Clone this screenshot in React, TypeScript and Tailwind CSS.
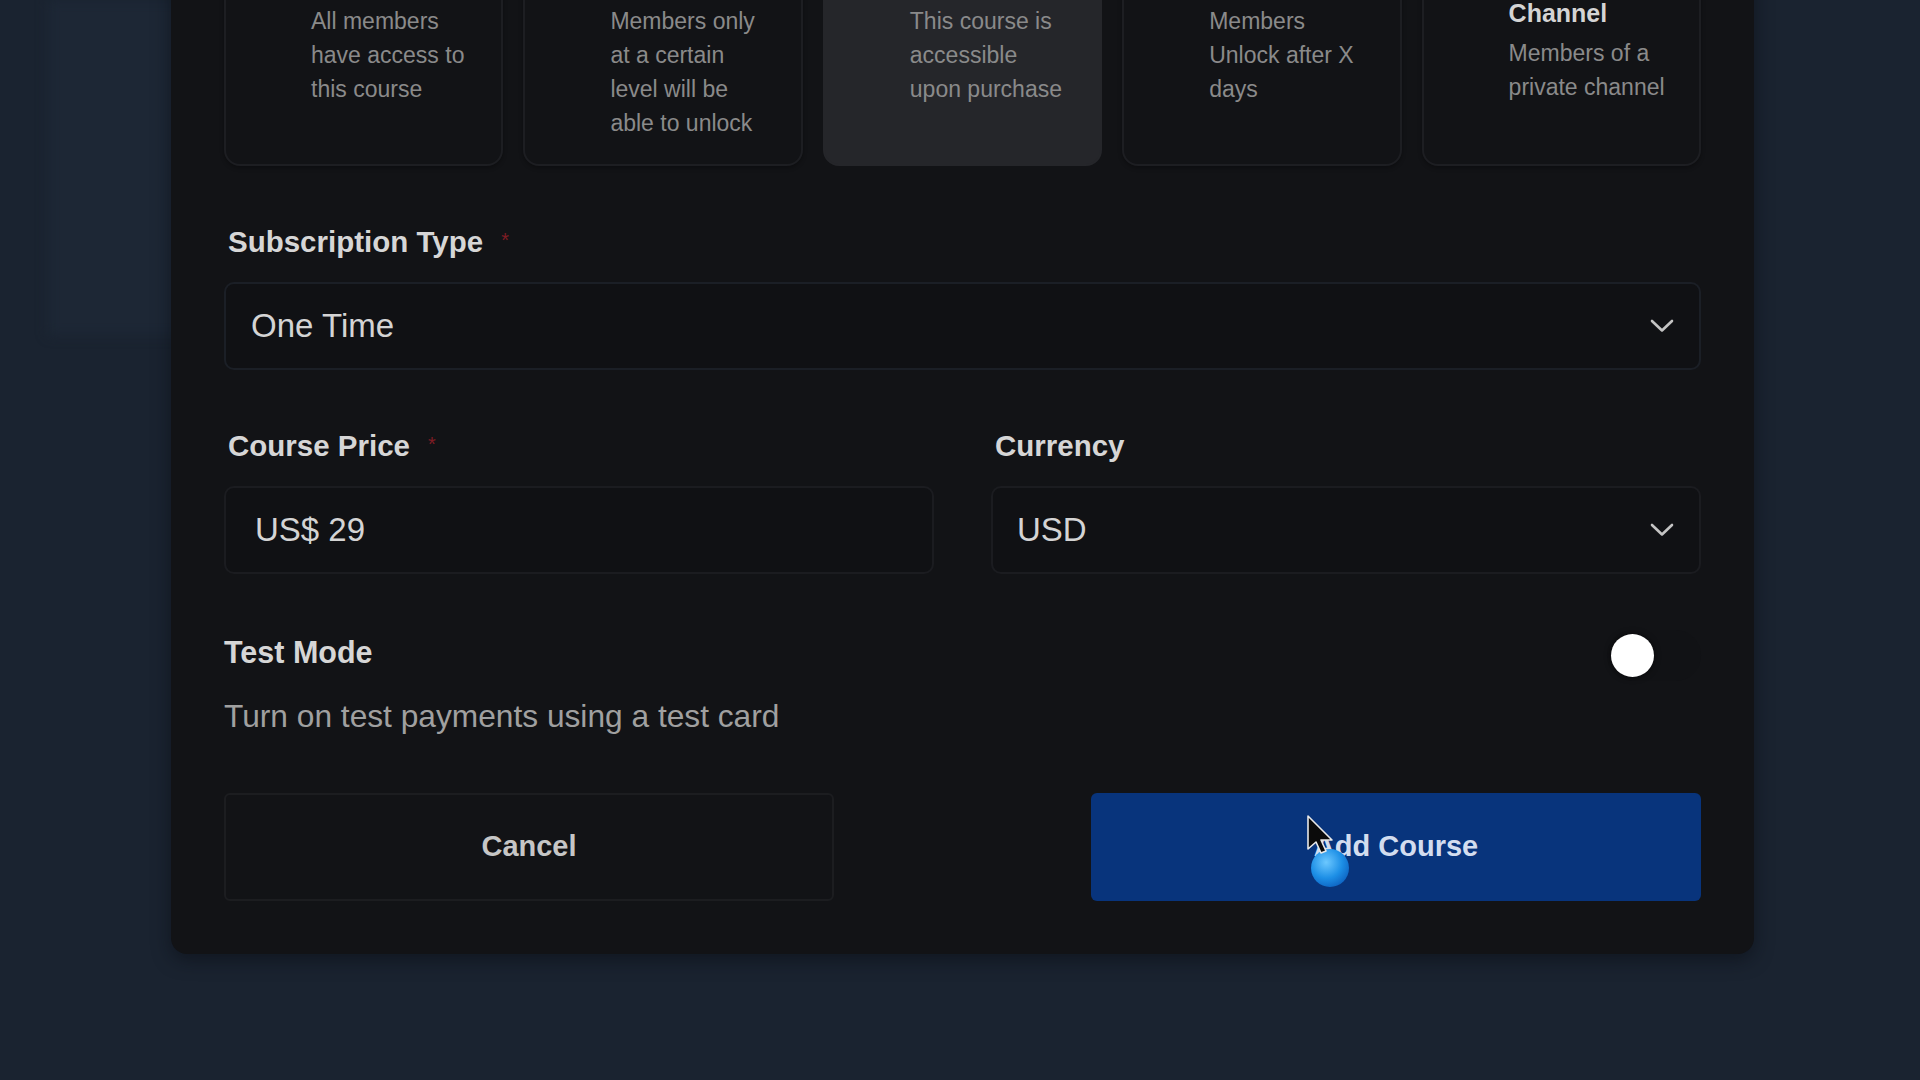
import { useState } from "react";

const accessOptions = [
  { id: "open", title: "Open", lines: ["All members", "have access to", "this course"] },
  { id: "level", title: "Level", lines: ["Members only", "at a certain", "level will be", "able to unlock"] },
  { id: "buy", title: "Buy Now", lines: ["This course is", "accessible", "upon purchase"] },
  { id: "time", title: "Time", lines: ["Members", "Unlock after X", "days"] },
  { id: "channel", title: "Private Channel", lines: ["Members of a", "private channel"] },
];

function ChevronDown() {
  return (
    <svg width="24" height="14" viewBox="0 0 24 14" fill="none">
      <path d="M2 2 L12 11.5 L22 2" stroke="#c4c4c4" strokeWidth="2.6" strokeLinecap="round" strokeLinejoin="round" />
    </svg>
  );
}

function FieldLabel({ text, required }: { text: string; required?: boolean }) {
  return (
    <div className="flex items-center mb-[23px] h-[34px] pl-[4px]">
      <span className="text-[29.5px] leading-[34px] font-bold text-[#d6d6d6]">{text}</span>
      {required && <span className="ml-[18px] -mt-[4px] text-[20px] leading-none text-[#7e1c24]">*</span>}
    </div>
  );
}

function Cursor() {
  return (
    <div className="absolute left-[1306px] top-[815px] pointer-events-none">
      <svg width="60" height="80" viewBox="0 0 60 80">
        <defs>
          <radialGradient id="blob" cx="40%" cy="35%" r="70%">
            <stop offset="0%" stopColor="#6cc8ff" />
            <stop offset="60%" stopColor="#1d8fe6" />
            <stop offset="100%" stopColor="#0d63c2" />
          </radialGradient>
        </defs>
        <circle cx="24" cy="53" r="19" fill="url(#blob)" />
        <path d="M2 1 L2 34 L10 27 L15 38 L20 36 L15 25 L26 25 Z" fill="#0b0b0b" stroke="#e8e8e8" strokeWidth="1.6" strokeLinejoin="round" />
      </svg>
    </div>
  );
}

export default function App() {
  const [selected] = useState("buy");
  const [testMode, setTestMode] = useState(false);

  return (
    <div
      className="relative w-full h-[1080px] overflow-hidden bg-[#1a2330]"
      style={{ fontFamily: '"Liberation Sans", Arial, sans-serif' }}
    >
      <div className="absolute left-[48px] top-0 w-[140px] h-[335px] bg-[#1d2735] blur-[6px]" />
      <div className="relative ml-[171px] w-[1583px] -mt-[203px] pt-[130px] px-[53px] pb-[53px] rounded-[16px] bg-[#121316] shadow-[0_6px_18px_rgba(10,12,20,0.55)]">
        <div className="grid grid-cols-5 gap-[20px]">
          {accessOptions.map((o) => {
            const active = o.id === selected;
            return (
              <div
                key={o.id}
                className={
                  active
                    ? "rounded-[16px] border-2 border-[#25262a] bg-[#25262a] pl-[85px] pr-[20px] pt-[36px] pb-[24px]"
                    : "rounded-[16px] border-2 border-[#1d1e22] bg-[#121316] pl-[85px] pr-[20px] pt-[36px] pb-[24px] shadow-[0_2px_4px_rgba(0,0,0,0.3)]"
                }
              >
                <div className="text-[25px] leading-[32px] font-bold text-[#d4d4d4] w-[150px]">{o.title}</div>
                <div className="mt-[7px] text-[23px] leading-[34px] text-[#8a8a8a]">
                  {o.lines.map((l) => (
                    <span key={l} className="block whitespace-nowrap">
                      {l}
                    </span>
                  ))}
                </div>
              </div>
            );
          })}
        </div>

        <div className="mt-[59px]">
          <FieldLabel text="Subscription Type" required />
          <div className="flex items-center justify-between h-[88px] rounded-[10px] border-2 border-[#1b1f26] bg-[#101114] pl-[25px] pr-[25px]">
            <span className="text-[33px] text-[#d4d4d4]">One Time</span>
            <ChevronDown />
          </div>
        </div>

        <div className="mt-[59px] grid grid-cols-2 gap-[57px]">
          <div>
            <FieldLabel text="Course Price" required />
            <div className="flex items-center h-[88px] rounded-[10px] border-2 border-[#1b1c20] bg-[#101114] pl-[29px]">
              <span className="text-[33px] text-[#d4d4d4]">US$ 29</span>
            </div>
          </div>
          <div>
            <FieldLabel text="Currency" />
            <div className="flex items-center justify-between h-[88px] rounded-[10px] border-2 border-[#1b1c20] bg-[#101114] pl-[24px] pr-[25px]">
              <span className="text-[33px] text-[#d4d4d4]">USD</span>
              <ChevronDown />
            </div>
          </div>
        </div>

        <div className="mt-[61px] flex items-start justify-between">
          <div>
            <div className="text-[30.5px] leading-[34px] font-bold text-[#d6d6d6]">Test Mode</div>
            <div className="mt-[27px] text-[31.7px] leading-[40px] text-[#a0a0a0]">
              Turn on test payments using a test card
            </div>
          </div>
          <button
            onClick={() => setTestMode(!testMode)}
            className="-mt-[5px] flex items-center w-[94px] h-[51px] rounded-full bg-[#111215] px-[4px]"
          >
            <span className="block w-[43px] h-[43px] rounded-full bg-white shadow-[0_0_6px_rgba(0,0,0,0.6)]" />
          </button>
        </div>

        <div className="mt-[57px] flex justify-between">
          <button className="w-[610px] h-[108px] rounded-[6px] border-2 border-[#1c1d20] bg-[#121316] text-[29px] font-semibold text-[#c6c6c6]">
            Cancel
          </button>
          <button className="w-[610px] h-[108px] rounded-[6px] bg-[#08347c] text-[29px] font-semibold text-[#d3ddef]">
            Add Course
          </button>
        </div>
      </div>
      <Cursor />
    </div>
  );
}
